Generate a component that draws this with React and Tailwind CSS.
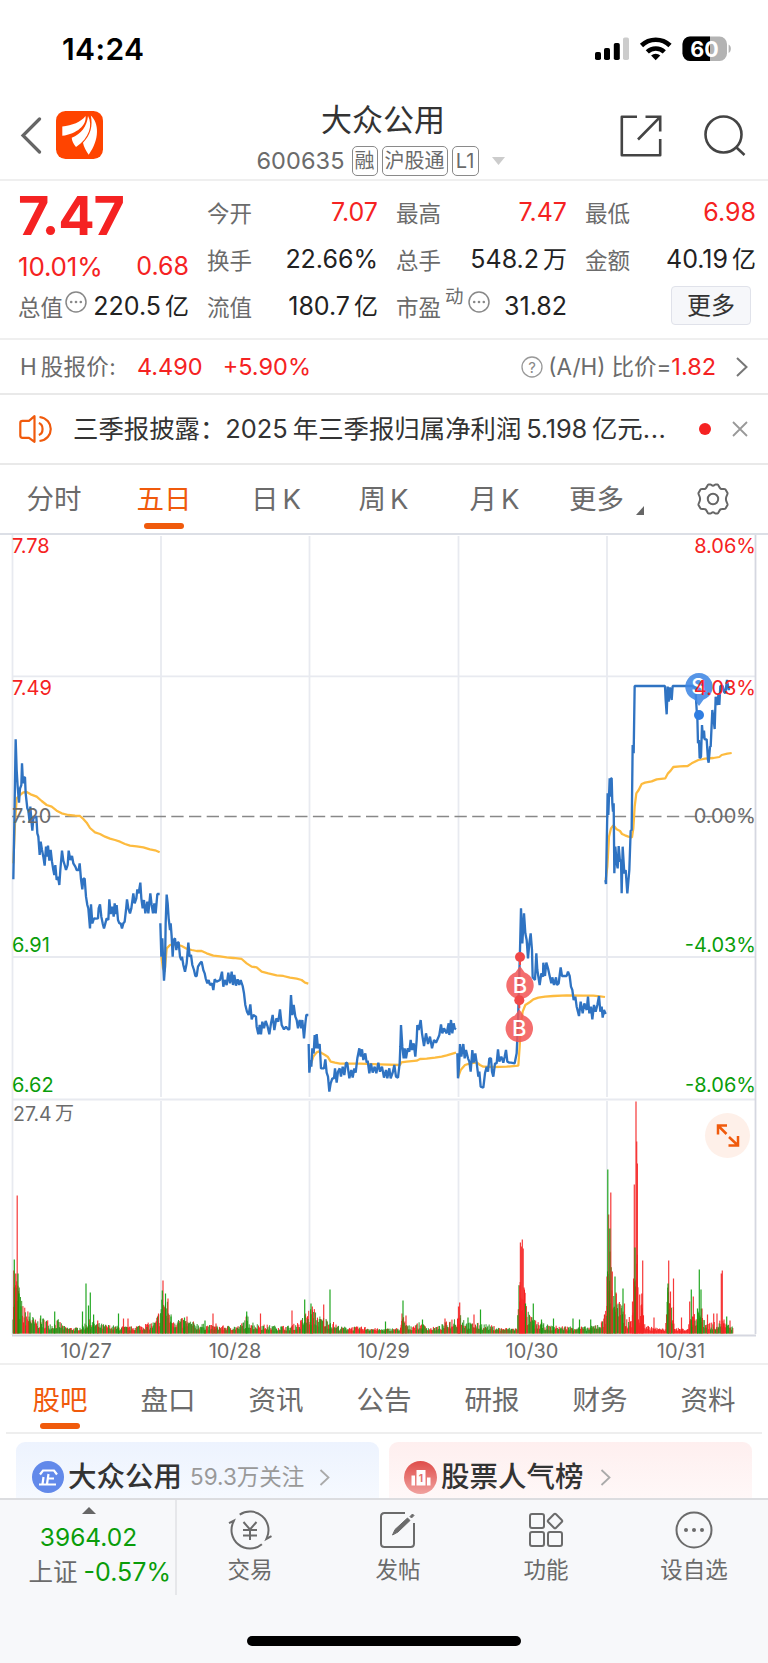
import clsx from "clsx";

/* price and average lines, one entry per trading day, drawn at 3x density */
const DAYS = [
  {
    origin: [0, 690],
    price:
      "40,568 43,400 47,148 50,240 53,290 57,338 60,296 64,285 66,220 69,280 72,262 75,262 77,310 82,355 85,362 89,397 91,350 94,390 97,422 100,385 105,380 109,380 112,430 115,440 119,495 122,455 126,480 130,500 134,527 138,470 141,500 144,467 148,512 152,480 156,515 160,540 163,555 166,525 170,570 174,560 178,585 181,540 186,482 190,512 194,525 198,540 203,525 206,482 211,510 216,498 220,520 226,530 230,540 236,540 239,520 243,568 247,598 250,566 254,566 258,620 262,645 265,655 270,715 273,643 277,700 282,685 288,686 294,685 296,655 300,643 304,680 308,700 312,715 316,700 320,685 325,690 328,628 332,672 337,650 341,680 344,640 348,672 350,645 354,690 358,700 362,700 366,715 370,700 374,695 378,660 381,628 385,655 390,670 394,655 400,610 404,640 409,625 412,598 416,610 421,578 424,625 428,655 432,630 436,670 442,635 445,670 451,610 455,645 459,670 463,640 467,670 472,612 479,612",
    avg: "40,520 45,400 50,325 60,315 70,307 80,306 92,313 110,320 125,333 140,345 155,350 170,362 185,370 205,375 225,377 240,378 250,387 260,398 270,414 285,427 300,432 315,440 330,446 345,450 360,455 375,462 390,467 410,469 430,472 450,478 465,481 479,487",
  },
  {
    origin: [0, 690],
    price:
      "481,700 484,800 487,745 490,830 492,872 495,830 497,700 500,614 503,640 506,685 510,720 512,700 515,740 518,800 521,750 525,745 529,780 533,757 536,757 540,800 544,810 546,800 550,825 555,845 560,820 565,758 569,800 573,795 577,825 582,840 586,858 590,858 594,830 600,820 605,815 610,840 614,850 617,865 622,880 626,870 630,885 636,880 640,900 644,868 650,875 660,870 666,845 670,890 674,870 680,885 685,848 690,880 695,845 699,885 703,855 708,887 713,868 718,885 722,870 728,888 732,910 736,945 741,965 746,975 751,943 755,988 760,975 768,980 770,1010 775,1033 779,1005 783,1033 787,995 792,1015 797,993 803,1010 808,1033 813,1000 818,975 823,1020 829,985 835,995 840,958 845,1005 852,1018 858,1010 864,1018 868,1018 873,915 877,975 881,945 886,980 890,990 894,1015 899,990 904,1015 907,990 912,1045 916,1000 919,975 925,975",
    avg: "484,800 489,835 494,845 500,775 510,765 520,763 530,763 545,768 560,776 575,780 590,783 605,783 620,790 640,797 660,799 680,802 700,804 725,807 740,820 755,830 770,832 785,845 805,850 830,856 850,858 870,863 890,866 905,870 915,878 925,881",
  },
  {
    origin: [300, 890],
    price:
      "26,462 28,548 32,510 34,530 37,475 41,490 44,435 48,475 50,432 54,475 59,462 63,535 72,535 76,508 80,548 84,560 88,605 92,580 97,565 102,565 105,535 110,578 114,545 119,535 123,560 128,530 133,555 138,518 142,520 148,565 154,540 158,563 163,535 167,548 172,505 175,490 178,475 182,500 186,478 190,510 196,490 200,518 203,512 208,550 213,520 218,548 224,530 229,550 235,518 240,545 246,530 252,563 258,540 262,565 268,535 272,565 278,548 283,525 288,560 294,563 299,520 301,470 303,405 307,470 311,505 314,475 318,505 323,475 328,485 332,450 336,480 341,460 346,500 350,450 352,405 356,420 362,390 366,430 372,468 378,430 384,462 390,440 396,475 402,450 408,458 414,445 418,435 423,403 427,430 432,415 440,430 446,400 448,435 453,390 457,430 461,400 464,415 468,418",
    avg: "30,530 40,500 50,487 58,484 66,490 75,495 83,500 92,515 105,518 120,521 180,521 240,523 300,525 304,517 320,515 350,512 360,507 380,506 405,503 425,500 440,496 468,488",
  },
  {
    origin: [300, 890],
    price:
      "472,490 474,565 477,530 480,462 484,500 490,462 494,505 498,480 504,505 508,515 512,545 517,480 521,518 526,490 530,518 535,560 538,545 542,590 550,593 555,550 560,530 564,545 568,505 573,505 576,545 580,560 585,520 590,520 594,478 598,515 604,500 610,518 614,500 618,480 622,515 628,518 633,518 644,520 650,490 654,400 656,320 660,180 663,55 667,160 672,70 676,130 680,150 684,205 688,160 692,130 696,180 698,262 705,270 709,190 712,240 719,285 724,250 729,260 730,218 735,258 739,218 744,235 749,258 754,280 757,262 762,285 768,262 771,285 776,280 779,255 782,232 786,258 792,258 800,258 804,245 809,258 813,290 817,300 821,330 826,320 830,350 837,378 842,335 848,370 853,340 860,360 864,320 868,370 873,350 877,388 882,345 887,365 892,345 897,318 901,365 905,350 908,383 912,360 917,372",
    avg: "474,562 482,540 495,525 510,520 530,517 540,525 550,530 580,531 620,530 655,527 659,470 663,400 668,365 676,345 690,336 700,328 715,323 735,320 760,318 800,316 850,317 880,317 900,319 915,321",
  },
  {
    origin: [590, 660],
    price:
      "46,660 48,672 50,560 53,400 55,465 59,355 60,410 63,355 65,355 67,430 69,455 71,430 73,640 76,560 80,610 83,625 86,558 90,605 93,600 95,700 98,560 103,640 107,630 112,700 118,630 122,512 125,510 128,255 131,280 134,78 225,78 227,120 230,163 233,80 236,125 240,82 245,120 248,78 305,78 316,82 320,150 322,170 324,250 327,240 329,295 333,290 336,195 339,235 342,212 344,238 350,238 354,300 356,308 360,260 362,260 367,150 371,180 374,207 377,110 381,135 386,100 388,135 391,78 398,78 402,95 406,100 411,60 416,90 420,78",
    avg: "47,660 52,620 57,530 63,505 70,496 80,508 90,513 96,522 105,526 115,530 126,532 130,505 134,440 139,400 146,390 155,372 165,368 185,364 200,358 226,355 234,340 242,332 250,321 270,319 293,318 305,310 325,300 345,296 370,294 388,291 395,285 412,281 425,279",
  },
];

/* volume: [x, usual height, share of red bars] */
const VOLUME_LEVELS = [
  [13, 50, 0.6], [18, 55, 0.7], [20, 35, 0.5], [24, 24, 0.6], [30, 18, 0.4],
  [36, 11, 0.5], [45, 14, 0.4], [52, 8, 0.5], [58, 12, 0.4], [65, 5, 0.5],
  [75, 4, 0.6], [82, 6, 0.4], [88, 12, 0.3], [95, 10, 0.5], [100, 8, 0.5],
  [115, 6, 0.5], [130, 5, 0.6], [145, 8, 0.5], [155, 10, 0.6], [160, 22, 0.7],
  [163, 40, 0.5], [167, 30, 0.5], [172, 15, 0.4], [185, 12, 0.4], [200, 8, 0.5],
  [215, 6, 0.6], [240, 6, 0.5], [247, 16, 0.4], [255, 8, 0.5], [275, 6, 0.5],
  [290, 6, 0.5], [300, 10, 0.5], [308, 22, 0.5], [314, 22, 0.5], [320, 15, 0.5],
  [330, 12, 0.5], [340, 5, 0.7], [365, 5, 0.5], [380, 3, 0.5], [400, 4, 0.6],
  [403, 16, 0.5], [408, 6, 0.6], [420, 9, 0.5], [430, 4, 0.5], [440, 6, 0.6],
  [455, 15, 0.5], [460, 20, 0.5], [467, 9, 0.4], [485, 8, 0.5], [500, 4, 0.6],
  [517, 4, 0.9], [519, 50, 1], [523, 60, 1], [527, 20, 0.4], [535, 11, 0.5],
  [550, 6, 0.5], [590, 5, 0.5], [603, 11, 0.6], [607, 50, 0.5], [610, 90, 0.5],
  [613, 48, 0.4], [620, 28, 0.4], [628, 12, 0.6], [632, 18, 0.9], [635, 80, 1],
  [637, 90, 1], [639, 18, 1], [642, 28, 1], [645, 8, 1], [650, 5, 1],
  [665, 3, 1], [667, 45, 0.3], [671, 26, 0.4], [673.5, 26, 0.8], [675, 4, 1],
  [688, 3, 1], [691, 20, 0.5], [695, 16, 0.5], [698, 28, 0.3], [702, 20, 0.4],
  [706, 10, 0.5], [715, 9, 0.5], [722, 12, 0.8], [726, 8, 0.6], [733, 5, 0.8],
];

const UP_PEAKS = [
  [13.8, 63], [15.7, 60], [17.2, 138], [97.7, 13], [123.5, 15], [128, 15], [158.5, 20], [163, 53],
  [168, 35], [187, 17], [213, 20], [216, 10], [260.5, 20], [292, 23], [312.3, 27], [323.7, 29],
  [402, 20], [406, 18], [445, 15], [458.5, 27], [459.7, 31], [474, 19], [519.7, 48], [520.4, 91],
  [521.6, 87], [522.3, 94], [523.2, 85], [524, 46], [604.5, 19], [607, 57], [608.7, 119],
  [610.8, 141], [612.3, 62], [616, 41], [620, 29], [624.5, 30], [632.5, 32], [634.3, 149],
  [636, 232], [636.7, 192], [637.4, 170], [639.7, 39], [641.8, 40], [642.7, 73], [654, 16],
  [668.7, 73], [670.5, 42], [673.5, 55], [681.5, 16], [689.7, 32], [693.3, 37], [702, 25],
  [707.5, 19], [713.7, 20], [717, 20], [721.3, 60], [722.3, 63], [724, 14], [730, 13],
];

const DOWN_PEAKS = [
  [14.3, 74], [18, 60], [19, 40], [30, 21], [40.7, 18], [54.7, 22], [82.5, 22], [86, 50],
  [88.5, 28], [90.3, 41], [93.6, 19], [118.5, 20], [162.3, 43], [165.5, 40], [171, 17],
  [184.5, 16], [205, 13], [246.7, 22], [304.7, 34], [311, 30], [330, 44], [385.5, 12],
  [403, 33], [422.5, 14], [468, 16], [480.5, 24], [525.5, 30], [533.3, 30], [541.5, 14],
  [553.5, 15], [573, 15], [579.5, 14], [590.7, 14], [607.8, 164], [609.8, 105], [615, 57],
  [623, 45], [635, 86], [668, 50], [691.3, 44], [697.5, 25], [699.3, 64], [701, 44], [726.7, 17],
];

const BASE = 1333.5;

function bar(x, h) {
  return `M${x.toFixed(2)} ${BASE}v${-h.toFixed(1)}`;
}

function buildVolume() {
  let seed = 7;
  const rand = () => {
    seed = (seed * 16807) % 2147483647;
    return seed / 2147483647;
  };
  let up = "";
  let down = "";
  let i = 0;
  for (let x = 13; x < 733; x += 0.62) {
    while (VOLUME_LEVELS[i + 1][0] < x) i++;
    const [x0, h0, r0] = VOLUME_LEVELS[i];
    const [x1, h1] = VOLUME_LEVELS[i + 1];
    const level = h0 + ((h1 - h0) * (x - x0)) / (x1 - x0);
    const h = 1.5 + level * (0.25 + 0.85 * rand());
    if (rand() < r0) up += bar(x, h);
    else down += bar(x, h);
  }
  return { up, down };
}

const volume = buildVolume();

const join = (peaks) => peaks.map(([x, h]) => bar(x, h)).join("");

function StatusBar() {
  return (
    <div className="flex h-[92px] items-center justify-between pt-[5px] pr-[36px] pl-[62px]">
      <span className="pt-px text-[30px] font-semibold tracking-[0.4px] text-black">14:24</span>
      <svg width="137" height="28" viewBox="595 35 137 28">
        <rect x="595" y="52" width="6" height="8" rx="1.8" />
        <rect x="604" y="48" width="6" height="12" rx="1.8" />
        <rect x="613.8" y="43" width="6" height="17" rx="1.8" />
        <rect x="623" y="37.5" width="6" height="22.5" rx="1.8" fill="#ccc" />
        <g fill="none" stroke="#000" strokeWidth="4.6">
          <path d="M641.5 45.5a20.5 20.5 0 0 1 28.5 0" />
          <path d="M647.3 51.8a12.4 12.4 0 0 1 17 0" />
        </g>
        <path d="M655.7 60.3l-4.6-4.8a6.8 6.8 0 0 1 9.2 0z" />
        <clipPath id="battery">
          <rect x="682.5" y="36.5" width="44.5" height="24.5" rx="7.5" />
        </clipPath>
        <g clipPath="url(#battery)">
          <rect x="682" y="36" width="46" height="26" fill="#b3b3b3" />
          <rect x="682" y="36" width="28" height="26" />
        </g>
        <path d="M728.6 44.5c3 1.2 3 7.2 0 8.4z" fill="#b3b3b3" />
        <text x="704.5" y="56.6" textAnchor="middle" fontSize="21.5" fontWeight="700" fill="#fff">
          60
        </text>
      </svg>
    </div>
  );
}

function Tag({ className, children }) {
  return (
    <span
      className={clsx(
        "flex h-[30px] items-center justify-center rounded-[5px] border-[1.5px] border-[#8a8a8a] text-[20px] leading-none whitespace-nowrap text-[#6b6b6b]",
        className,
      )}
    >
      {children}
    </span>
  );
}

function Header() {
  return (
    <header className="flex h-[89px] items-start justify-between border-b-2 border-[#efefef] pr-[22px] pl-[20px]">
      <div className="flex w-[160px] items-center gap-[14px] pt-[19px]">
        <svg width="22" height="38" viewBox="0 0 22 38" fill="none" stroke="#666" strokeWidth="3.2" strokeLinecap="round">
          <path d="M19.500 3 3 19.500l16.500 16.500" />
        </svg>
        <svg width="47" height="48" viewBox="0 0 47 48">
          <rect width="47" height="48" rx="9.5" fill="#ff4400" />
          <g fill="#fff">
            <path d="M6.300 24.800V15.500C16 14.500 25 11 29.500 5 31 14 21 23 6.300 24.800z" />
            <path d="M20 36c-2.500-3-4-6-4.300-9.300C25 23 31 15.500 32 5c5 9 1.500 22-12 31z" />
            <path d="M32.700 43.800c-2.700-4-5-8-5.700-12C34.500 24 37 15 34.800 4.500 43 12 44 28 32.700 43.800z" />
          </g>
        </svg>
      </div>
      <div className="flex flex-col items-center pt-[4px]">
        <h1 className="text-[31px] leading-[47px] text-[#333]">大众公用</h1>
        <div className="flex items-center gap-1 pt-[3px] pr-[5px]">
          <span className="mr-[3px] text-[23.500px] leading-none tracking-[0.1px] text-[#6b6b6b]">600635</span>
          <Tag className="w-[26px]">融</Tag>
          <Tag className="w-[66px]">沪股通</Tag>
          <Tag className="w-[27px]">L1</Tag>
          <svg className="ml-[9px]" width="13" height="8" viewBox="0 0 13 8" fill="#ccc">
            <path d="M0 0h13L6.500 8z" />
          </svg>
        </div>
      </div>
      <div className="flex w-[160px] items-center justify-end gap-[42px] pt-[23px]">
        <svg width="42" height="42" viewBox="0 0 42 42" fill="none" stroke="#444" strokeWidth="2.600">
          <path d="M17 1.800H1.800v38.400h38.400V24" strokeLinejoin="round" />
          <path d="M25.500 1.800h14.700v14.700M40.200 1.800 18 24.500" />
        </svg>
        <svg width="42" height="42" viewBox="0 0 42 42" fill="none" stroke="#444" strokeWidth="2.600">
          <circle cx="19.500" cy="19.500" r="18" />
          <path d="m32.500 32.500 8 7.500" />
        </svg>
      </div>
    </header>
  );
}

function Dots({ className }) {
  return (
    <svg className={className} width="22" height="22" viewBox="0 0 22 22" fill="#888">
      <circle cx="11" cy="11" r="10" fill="none" stroke="#888" strokeWidth="1.500" />
      <circle cx="6.200" cy="11" r="1.300" />
      <circle cx="11" cy="11" r="1.300" />
      <circle cx="15.800" cy="11" r="1.300" />
    </svg>
  );
}

function Field({ label, value, unit, up, children }) {
  return (
    <div className="flex h-[47px] items-center justify-between whitespace-nowrap">
      <span className="flex items-center pt-[3px] text-[22.5px] text-[#6b6b6b]">
        {label}
        {children}
      </span>
      <span className={clsx("text-[25px]", up ? "text-[#f52222]" : "text-[#222]")}>
        {value}
        {unit && <span className="ml-[4px] text-[24px]">{unit}</span>}
      </span>
    </div>
  );
}

function Quote() {
  return (
    <section className="grid h-[159px] grid-cols-4 gap-x-[18px] border-b-2 border-[#efefef] pt-[8px] pr-[12px] pl-[18px]">
      <div className="flex flex-col">
        <span className="h-[58px] text-[54px] leading-[54px] font-bold tracking-[-1.200px] text-[#f52222]">7.47</span>
        <div className="flex h-[36px] items-center justify-between pt-[3px] text-[25px] text-[#f52222]">
          <span className="text-[26px] tracking-[-0.2px]">10.01%</span>
          <span>0.68</span>
        </div>
        <Field label="总值" value="220.5" unit="亿">
          <Dots className="-mt-[13px] ml-[2px]" />
        </Field>
      </div>
      <div>
        <Field label="今开" value="7.07" up />
        <Field label="换手" value="22.66%" />
        <Field label="流值" value="180.7" unit="亿" />
      </div>
      <div>
        <Field label="最高" value="7.47" up />
        <Field label="总手" value="548.2" unit="万" />
        <Field label="市盈" value="31.82">
          <span className="-mt-[23px] ml-[4px] text-[18.500px]">动</span>
          <Dots className="-mt-[13px] ml-[4px]" />
        </Field>
      </div>
      <div>
        <Field label="最低" value="6.98" up />
        <Field label="金额" value="40.19" unit="亿" />
        <div className="flex h-[45px] items-center justify-end pr-[5px]">
          <button
            type="button"
            className="flex h-[39px] w-[80px] items-center justify-center rounded-[4px] border-[1.5px] border-[#e0e2ea] bg-[#f6f7fa] text-[24px] text-[#333]"
          >
            更多
          </button>
        </div>
      </div>
    </section>
  );
}

function HShareRow() {
  return (
    <div className="flex h-[55px] items-center border-b-2 border-[#e9e9e9] pr-[20px] pl-[20px] text-[22.500px] whitespace-nowrap text-[#6b6b6b]">
      <span>H<span className="ml-[4px] tracking-[0.3px]">股报价:</span></span>
      <span className="ml-[21px] text-[23.500px] text-[#f52222]">4.490</span>
      <span className="ml-[20px] text-[23.500px] text-[#f52222]">+5.90%</span>
      <svg className="ml-auto" width="22" height="22" viewBox="0 0 22 22">
        <circle cx="11" cy="11" r="10" fill="none" stroke="#999" strokeWidth="1.300" />
        <text x="11" y="16.500" textAnchor="middle" fontSize="15" fill="#888">?</text>
      </svg>
      <span className="ml-[5px]">(A/H)<span className="ml-[6px]">比价=</span></span>
      <span className="text-[23.500px] text-[#f52222]">1.82</span>
      <svg className="ml-[20px]" width="12" height="20" viewBox="0 0 12 20" fill="none" stroke="#777" strokeWidth="2">
        <path d="m1 1 9.500 9L1 19" />
      </svg>
    </div>
  );
}

function NewsRow() {
  return (
    <div className="flex h-[70px] items-center border-b-2 border-[#e9e9e9] pr-[20px] pl-[19px]">
      <svg width="34" height="28" viewBox="0 0 34 28" fill="none" stroke="#f05a0c" strokeWidth="2.200" strokeLinejoin="round">
        <path d="M15.500 1.200v25.600l-5.500-4H3.500Q1.300 22.800 1.300 20.500V8Q1.300 5.800 3.500 5.800H10z" />
        <path d="M19.800 8c5 1.500 5 10.500 0 12" />
        <path d="M20.500 2c15 2 15 22 0 24" />
      </svg>
      <span className="ml-[20px] text-[25.400px] whitespace-nowrap text-[#333]">
        三季报披露：<span className="mr-[5px]">2025</span>年三季报归属净利润
        <span className="mr-[5px] ml-[5px] tracking-[-0.2px]">5.198</span>亿元
        <span className="tracking-[0.6px]">...</span>
      </span>
      <span className="ml-auto size-[12px] rounded-full bg-[#f52222]" />
      <svg className="ml-[21px]" width="16" height="16" viewBox="0 0 16 16" stroke="#999" strokeWidth="1.800">
        <path d="m1 1 14 14M15 1 1 15" />
      </svg>
    </div>
  );
}

const PERIODS = [
  { label: "分时", width: "w-[108px]" },
  { label: "五日", width: "w-[112px]", active: true },
  { label: "日", k: true, width: "w-[112px]" },
  { label: "周", k: true, width: "w-[103px]" },
  { label: "月", k: true, width: "w-[119px]" },
];

function PeriodTabs() {
  return (
    <nav className="flex h-[70px] border-b-2 border-[#dcdfe6] text-[27.500px] text-[#6b6b6b]">
      {PERIODS.map(({ label, k, width, active }) => (
        <div key={label} className={clsx("flex flex-col items-center", width)}>
          <span className={clsx("h-[58px] leading-[68px]", active && "text-[#f05a0c]")}>
            {label}
            {k && <span className="ml-[4px]">K</span>}
          </span>
          {active && <span className="h-[6px] w-[40px] rounded-[3px] bg-[#f05a0c]" />}
        </div>
      ))}
      <div className="flex h-[58px] w-[112px] items-end pl-[15px]">
        <span className="leading-[48px]">更多</span>
        <svg className="mb-[8px] ml-[12px]" width="8" height="9" viewBox="0 0 8 9" fill="#666">
          <path d="M8 0v9H0z" />
        </svg>
      </div>
      <svg className="mt-[18px] ml-[31px]" width="32" height="32" viewBox="0 0 32 32" fill="none" stroke="#666" strokeWidth="2">
        <path
          d="M11.500 1.500h2c.8 0 1.200 1.200 2.500 1.200s1.700-1.200 2.500-1.200h2c1 0 1.600 3.300 3 4.200s4.300-.3 5 .8l2 3.500c.6 1.200-1.600 3-1.600 6s2.200 4.800 1.600 6l-2 3.500c-.7 1.100-3.600-.1-5 .8s-2 4.200-3 4.200h-2c-.8 0-1.200-1.200-2.500-1.200s-1.700 1.200-2.500 1.200h-2c-1 0-1.600-3.300-3-4.200s-4.300.3-5-.8l-2-3.500C.900 20.800 3.100 19 3.100 16S.900 11.200 1.500 10l2-3.500c.7-1.100 3.600.1 5-.8s2-4.200 3-4.200z"
          strokeLinejoin="round"
        />
        <circle cx="16" cy="16" r="5.200" />
      </svg>
    </nav>
  );
}

const GRID_X = [161, 309.5, 458.5, 607];

const LEFT_LABELS = [
  { y: 553, text: "7.78", fill: "#f52222" },
  { y: 695, text: "7.49", fill: "#f52222" },
  { y: 822.5, text: "7.20", fill: "#6b6b6b" },
  { y: 951.5, text: "6.91", fill: "#0a9d0a" },
  { y: 1092, text: "6.62", fill: "#0a9d0a" },
];

const RIGHT_LABELS = [
  { y: 553, text: "8.06%", fill: "#f52222" },
  { y: 695, text: "4.03%", fill: "#f52222" },
  { y: 822.5, text: "0.00%", fill: "#6b6b6b" },
  { y: 951.5, text: "-4.03%", fill: "#0a9d0a" },
  { y: 1092, text: "-8.06%", fill: "#0a9d0a" },
];

const DATES = [
  { x: 86, text: "10/27" },
  { x: 235, text: "10/28" },
  { x: 383.5, text: "10/29" },
  { x: 532, text: "10/30" },
  { x: 681, text: "10/31" },
];

function BuyPin({ x, y }) {
  return (
    <g>
      <path d={`M${x} ${y}v8`} stroke="#ef4444" strokeWidth="2" />
      <circle cx={x} cy={y} r="5" fill="#f04848" />
      <path
        d={`M${x} ${y + 9}l4.500 6.300a13.700 13.700 0 1 1 -9 0z`}
        fill="#f25555"
        fillOpacity="0.85"
      />
      <text x={x} y={y + 36} textAnchor="middle" fontSize="22" fontWeight="500" fill="#fff">
        B
      </text>
    </g>
  );
}

function Chart() {
  return (
    <svg className="block" width="768" height="830" viewBox="0 535 768 830" fontSize="20">
      <g stroke="#e8eaf0" strokeWidth="1.800">
        <path d="M12.500 535V1335M12 676.300H755M12 957H755M12 1099.500H755" />
        {GRID_X.map((x) => (
          <path key={x} d={`M${x} 536V1097M${x} 1101V1334`} />
        ))}
        <path d="M12 1335.500H756M755.500 535V1334" stroke="#d5d7e0" />
      </g>
      <path d="M12 816.500H755" stroke="#888" strokeWidth="1.700" strokeDasharray="12.300 5.400" />

      {DAYS.map(({ origin: [x, y], price, avg }) => (
        <g
          key={price}
          transform={`translate(${x} ${y}) scale(0.33333)`}
          fill="none"
          strokeLinejoin="bevel"
        >
          <polyline points={avg} stroke="#fdbb3f" strokeWidth="6.800" />
          <polyline points={price} stroke="#2f73c2" strokeWidth="7" />
        </g>
      ))}

      <g fill="none" strokeWidth="1">
        <path d={volume.up} stroke="#f52222" />
        <path d={volume.down} stroke="#1f9010" strokeWidth="0.900" />
        <path d={join(UP_PEAKS)} stroke="#f52222" strokeOpacity="0.900" strokeWidth="1.200" />
        <path d={join(DOWN_PEAKS)} stroke="#0a9d0a" strokeOpacity="0.900" strokeWidth="1.200" />
      </g>

      <BuyPin x={520} y={957} />
      <BuyPin x={519.3} y={1000.3} />

      <path d="M699 706l-4.500-6.300a13.700 13.700 0 1 1 9 0z" fill="#4088e4" fillOpacity="0.880" />
      <circle cx="699" cy="715" r="5" fill="#2f7de1" />
      <text x="698" y="694" textAnchor="middle" fontSize="21" fontWeight="500" fill="#fff">
        S
      </text>

      {LEFT_LABELS.map(({ y, text, fill }) => (
        <text key={text} x="12" y={y} fill={fill}>{text}</text>
      ))}
      {RIGHT_LABELS.map(({ y, text, fill }) => (
        <text key={text} x="756" y={y} textAnchor="end" fill={fill}>{text}</text>
      ))}
      <text x="13" y="1120.500" fill="#6b6b6b" fontSize="19.500">27.4</text>
      <text x="55" y="1120" fill="#6b6b6b" fontSize="19">万</text>
      {DATES.map(({ x, text }) => (
        <text key={text} x={x} y="1357.500" textAnchor="middle" fill="#6b6b6b">
          {text}
        </text>
      ))}

      <circle cx="727.500" cy="1135.500" r="22.500" fill="#fef0e9" />
      <g fill="none" stroke="#f05a0c" strokeWidth="2.500">
        <path d="M727 1125.500h-9v9M718.500 1126l8 8" />
        <path d="M728.500 1145.500h9.500v-9.500M737.500 1145l-8.500-8" />
      </g>
    </svg>
  );
}

const SECTIONS = ["股吧", "盘口", "资讯", "公告", "研报", "财务", "资料"];

function SectionTabs() {
  return (
    <nav className="mx-[6px] flex h-[69px] border-b-2 border-[#eee] text-[27.500px] text-[#6b6b6b]">
      {SECTIONS.map((label, i) => (
        <div key={label} className="flex w-[108px] flex-col items-center">
          <span className={clsx("h-[58px] leading-[70px]", i === 0 && "text-[#f05a0c]")}>{label}</span>
          {i === 0 && <span className="h-[6px] w-[40px] rounded-[3px] bg-[#f05a0c]" />}
        </div>
      ))}
    </nav>
  );
}

function Chevron({ className }) {
  return (
    <svg className={className} width="11" height="17" viewBox="0 0 11 17" fill="none" stroke="#aaa" strokeWidth="1.800">
      <path d="m1.500 1 8 7.500-8 7.500" />
    </svg>
  );
}

function Cards() {
  return (
    <section className="flex h-[64px] gap-[10px] overflow-hidden pt-[8px] pr-4 pl-4">
      <div className="flex h-[70px] w-[363px] items-center rounded-t-[9px] bg-linear-to-b from-[#edf3fe] to-[#f8fbff] pl-4">
        <svg width="32" height="32" viewBox="0 0 32 32">
          <circle cx="16" cy="16" r="16" fill="#6289ea" />
          <g fill="none" stroke="#fff" strokeWidth="2.200">
            <path d="M8 13.500 11 9.500H22L25 13.500" />
            <path d="M7 23.500H24M16.500 13 15 23M16 17.500H22M11.500 16 10.500 23" />
          </g>
        </svg>
        <span className="ml-[4px] text-[28.500px] font-medium text-[#333]">大众公用</span>
        <span className="ml-[8px] text-[22.500px] text-[#999]">59.3万关注</span>
        <Chevron className="ml-[15px]" />
      </div>
      <div className="flex h-[70px] w-[363px] items-center rounded-t-[9px] bg-linear-to-b from-[#feefef] to-[#fffafa] pl-[15px]">
        <svg width="33" height="33" viewBox="0 0 33 33">
          <defs>
            <linearGradient id="rank" x2="0" y2="1">
              <stop stopColor="#df4d4a" />
              <stop offset="1" stopColor="#f0a19e" />
            </linearGradient>
          </defs>
          <circle cx="16.500" cy="16.500" r="16.500" fill="url(#rank)" />
          <path d="M7.500 14.500h3.500v10H7.500zM12.500 9h9v15.500h-9zM23 16.500h3.500v8H23z" fill="#fff" />
          <text x="17" y="21" textAnchor="middle" fontSize="10" fontWeight="700" fill="#e36f6c">1</text>
        </svg>
        <span className="ml-[4px] text-[28.500px] font-medium text-[#333]">股票人气榜</span>
        <Chevron className="ml-[16px]" />
      </div>
    </section>
  );
}

function Action({ label, children }) {
  return (
    <div className="flex w-[148px] flex-col items-center pt-[10px]">
      <svg width="44" height="40" viewBox="0 0 44 40" fill="none" stroke="#6b6b6b" strokeWidth="2">
        {children}
      </svg>
      <span className="mt-[3px] text-[22.500px] leading-[34px] text-[#6b6b6b]">{label}</span>
    </div>
  );
}

function BottomBar() {
  return (
    <footer className="flex h-[165px] flex-col justify-between border-t-2 border-[#dcdde0] bg-[#f7f8fa]">
      <div className="flex">
        <div className="flex h-[95px] w-[178px] flex-col items-center border-r-2 border-[#e6e7ea] pt-[7px]">
          <svg className="ml-[2px]" width="14" height="7" viewBox="0 0 14 7" fill="#666">
            <path d="M0 7h14L7 0z" />
          </svg>
          <span className="mt-[5px] ml-[2px] text-[24.500px] leading-[36px] text-[#0a9d0a]">3964.02</span>
          <div className="flex w-full items-center justify-end pr-[4px] leading-[34px] whitespace-nowrap">
            <span className="text-[24.500px] text-[#6b6b6b]">上证</span>
            <span className="ml-[6px] text-[25px] text-[#0a9d0a]">-0.57%</span>
          </div>
        </div>
        <div className="-ml-px flex">
          <Action label="交易">
            <path d="M11.700 4.700A18.500 18.500 0 0 1 38.800 27.800l-.5 1.200 5.200-2.800" />
            <path d="M33.900 34.200A18.500 18.500 0 0 1 5.700 11.300l.3-.8-5 2.600" />
            <path d="m15.500 12 6.500 7.500 6.500-7.500M22 19.500V30M15 20h14M15 25.500h14" />
          </Action>
          <Action label="发帖">
            <path d="M29 3H8.500Q5 3 5 6.500v27Q5 37 8.500 37h26Q38 37 38 33.500V13" />
            <path d="M16.500 25 19 19.500 31.500 8l2.500 2.500L22 22zM34 6.500 36.500 4l1.500 1.500L35.500 8z" fill="#6b6b6b" strokeWidth="1" />
          </Action>
          <Action label="功能">
            <rect x="6" y="4" width="14" height="14" rx="2" />
            <rect x="6" y="22" width="14" height="14" rx="2" />
            <rect x="24" y="22" width="14" height="14" rx="2" />
            <rect x="25.500" y="5.500" width="11" height="11" rx="1.500" transform="rotate(45 31 11)" />
          </Action>
          <Action label="设自选">
            <circle cx="22" cy="20" r="17.500" />
            <g fill="#6b6b6b" stroke="none">
              <circle cx="14" cy="20" r="2" />
              <circle cx="22" cy="20" r="2" />
              <circle cx="30" cy="20" r="2" />
            </g>
          </Action>
        </div>
      </div>
      <div className="mb-[17px] h-[10px] w-[274px] self-center rounded-full bg-black" />
    </footer>
  );
}

function App() {
  return (
    <div className="flex h-[1663px] w-[768px] flex-col overflow-hidden bg-white font-['Inter','Noto_Sans_CJK_SC',sans-serif]">
      <StatusBar />
      <Header />
      <Quote />
      <HShareRow />
      <NewsRow />
      <PeriodTabs />
      <div className="h-[830px] border-b-2 border-[#efefef]">
        <Chart />
      </div>
      <SectionTabs />
      <Cards />
      <BottomBar />
    </div>
  );
}

export default App;
